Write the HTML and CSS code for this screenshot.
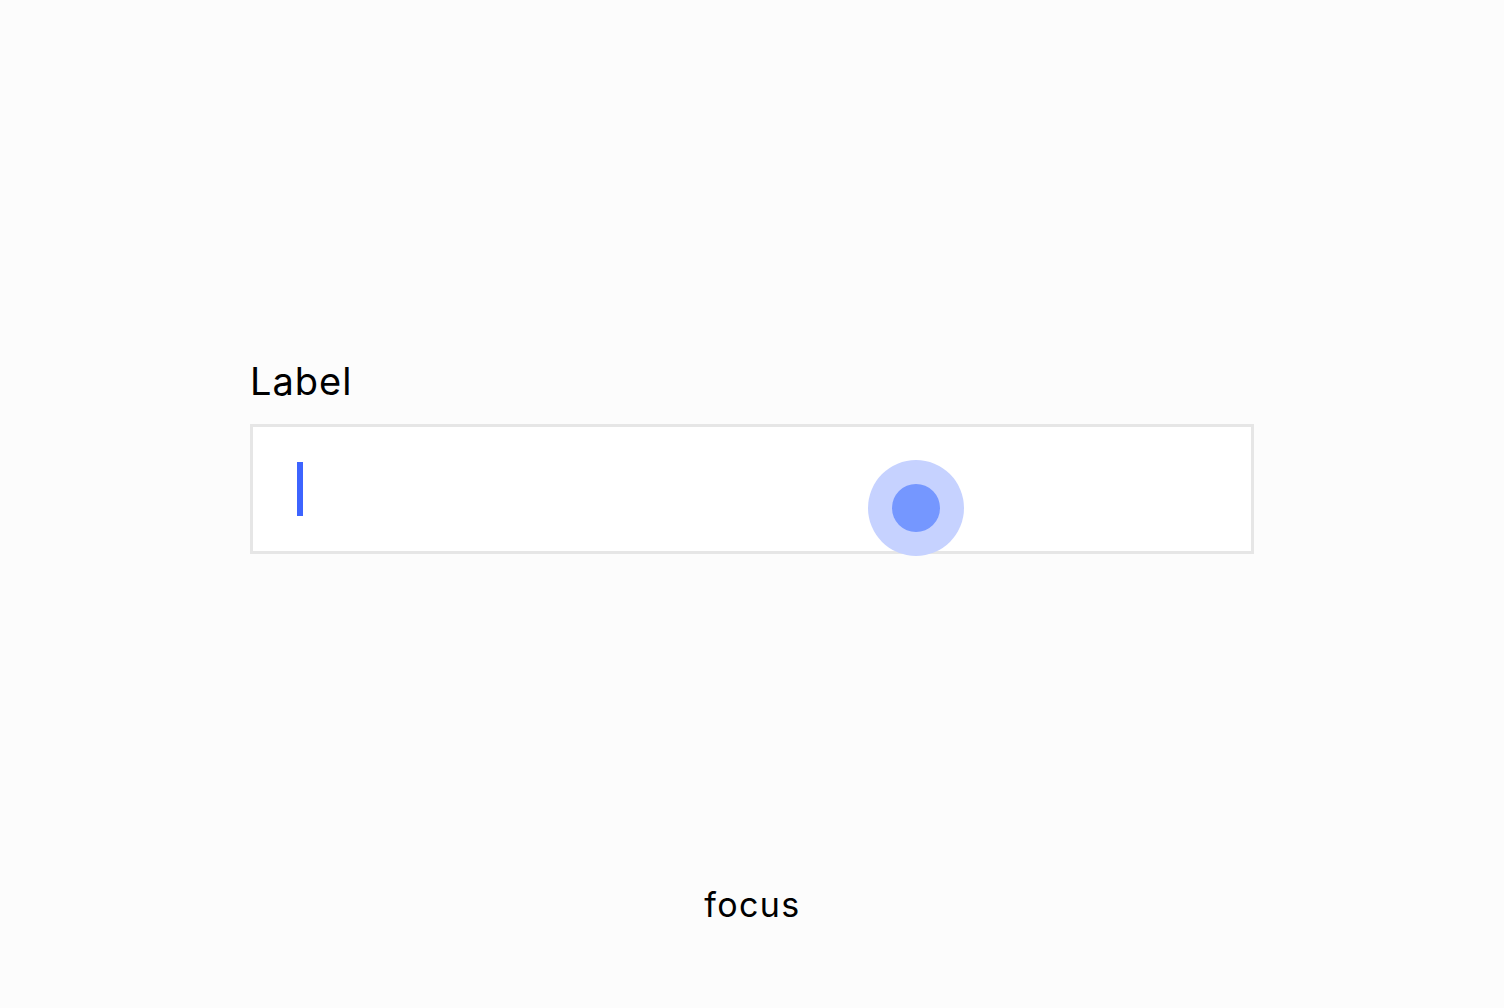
FILE: index.html
```html
<!DOCTYPE html>
<html lang="en">
<head>
<meta charset="utf-8">
<title>Input focus</title>
<link rel="stylesheet" href="styles.css">
</head>
<body>
<main class="page">
  <div class="field">
    <div class="label">Label</div>
    <div class="input">
      <span class="caret"></span>
      <span class="touch"><span class="touch-core"></span></span>
    </div>
  </div>
  <div class="caption">focus</div>
</main>
</body>
</html>
```
FILE: styles.css
```css
html, body {
  margin: 0;
  padding: 0;
}
body {
  background: #fcfcfc;
  font-family: Inter, "Noto Sans", sans-serif;
  color: #000;
}
.page {
  box-sizing: border-box;
  height: 1008px;
  padding-top: 358px;
  padding-bottom: 83px;
  display: flex;
  flex-direction: column;
}
.field {
  margin-left: 250px;
  width: 1004px;
}
.label {
  font-size: 38px;
  line-height: 46px;
  letter-spacing: 1px;
  margin-bottom: 20px;
}
.input {
  position: relative;
  box-sizing: border-box;
  height: 130px;
  border: 3px solid #e6e6e6;
  background: #fff;
  display: flex;
  align-items: center;
  padding-left: 44px;
}
.caret {
  width: 6px;
  height: 54px;
  background: #3d64ff;
}
.touch {
  position: absolute;
  left: 615px;
  top: 33px;
  width: 96px;
  height: 96px;
  border-radius: 50%;
  background: #c6d2ff;
  display: flex;
  align-items: center;
  justify-content: center;
}
.touch-core {
  width: 48px;
  height: 48px;
  border-radius: 50%;
  background: #7597ff;
}
.caption {
  margin-top: auto;
  text-align: center;
  font-size: 34px;
  line-height: 40px;
  letter-spacing: 1.4px;
  padding-left: 1px;
}
```
